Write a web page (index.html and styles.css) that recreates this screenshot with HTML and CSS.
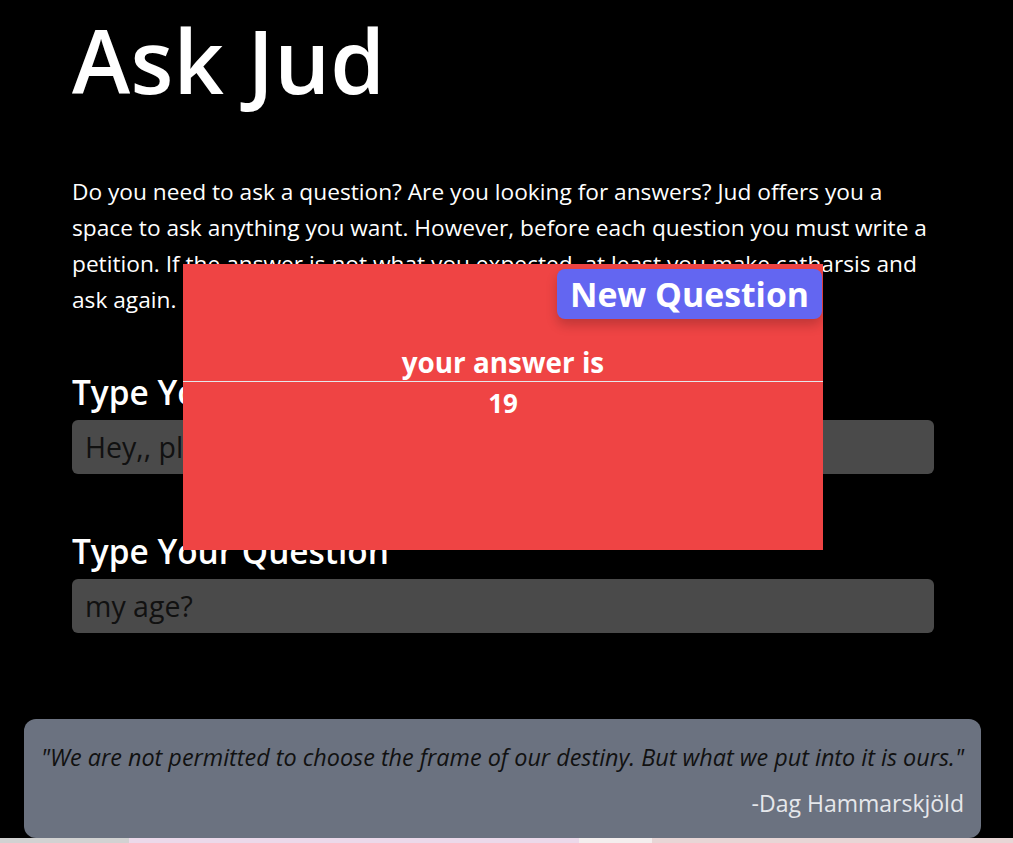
FILE: index.html
```html
<!DOCTYPE html>
<html lang="en">
<head>
<meta charset="utf-8">
<title>Ask Jud</title>
<link rel="stylesheet" href="styles.css">
</head>
<body>
<main class="page">
  <div class="container">
    <h1 class="title">Ask Jud</h1>
    <p class="intro">Do you need to ask a question? Are you looking for answers? Jud offers you a space to ask anything you want. However, before each question you must write a petition. If the answer is not what you expected, at least you make catharsis and ask again.</p>
    <form class="form">
      <label class="field">
        <span class="label">Type Your Petition</span>
        <input class="input" type="text" value="Hey,, please Jud answer my question">
      </label>
      <label class="field field-second">
        <span class="label">Type Your Question</span>
        <input class="input" type="text" value="my age?">
      </label>
    </form>
  </div>
  <footer class="quote">
    <p class="quote-text">"We are not permitted to choose the frame of our destiny. But what we put into it is ours."</p>
    <p class="quote-author">-Dag Hammarskjöld</p>
  </footer>
  <div class="answer">
    <button class="new-btn" type="button">New Question</button>
    <p class="answer-title">your answer is</p>
    <hr class="answer-rule">
    <p class="answer-value">19</p>
  </div>
</main>
<div class="strip">
  <span class="seg seg-a"></span>
  <span class="seg seg-b"></span>
  <span class="seg seg-c"></span>
  <span class="seg seg-d"></span>
</div>
</body>
</html>
```

FILE: styles.css
```css
* { box-sizing: border-box; }
html, body { margin: 0; padding: 0; }
body {
  background: #000;
  color: #fff;
  font-family: "Open Sans", "Noto Sans", sans-serif;
  height: 843px;
  overflow: hidden;
  display: flex;
  flex-direction: column;
}
.page {
  position: relative;
  height: 838px;
  display: flex;
  flex-direction: column;
}
.container {
  margin-left: 72px;
  width: 862px;
  flex: 1;
}
.title {
  margin: 0;
  padding-top: 2px;
  font-size: 88px;
  line-height: 116px;
  font-weight: 600;
  letter-spacing: 0.3px;
  height: 116px;
}
.intro {
  margin: 58px 0 0;
  font-size: 22.7px;
  line-height: 36px;
}
.form {
  margin-top: 56px;
  display: flex;
  flex-direction: column;
}
.field { display: flex; flex-direction: column; gap: 10px; }
.field-second { margin-top: 59px; }
.label {
  font-size: 33.4px;
  line-height: 36px;
  font-weight: 600;
}
.input {
  height: 54px;
  border: none;
  border-radius: 6px;
  background: #4a4a4a;
  color: #111;
  font-family: inherit;
  font-size: 28.5px;
  padding: 0 13px;
  outline: none;
}
.quote {
  margin: 0 32px 0 24px;
  height: 119px;
  background: #6b7280;
  border-radius: 12px;
  padding: 22px 17px 0 17px;
  display: flex;
  flex-direction: column;
}
.quote-text {
  margin: 0;
  font-style: italic;
  color: #111;
  font-size: 23.4px;
  line-height: 32px;
  text-align: center;
  white-space: nowrap;
}
.quote-author {
  margin: 0;
  margin-top: 15px;
  text-align: right;
  color: #e5e7eb;
  font-size: 23px;
  line-height: 30px;
}
.answer {
  position: absolute;
  left: 183px;
  top: 264px;
  width: 640px;
  height: 286px;
  background: #ef4444;
  display: flex;
  flex-direction: column;
  align-items: center;
}
.new-btn {
  align-self: flex-end;
  margin-top: 5px;
  margin-right: 1px;
  height: 50px;
  width: 265px;
  border: none;
  border-radius: 8px;
  background: #6366f1;
  color: #fff;
  font-family: inherit;
  font-weight: 700;
  font-size: 33.8px;
  padding: 0;
  box-shadow: 0 6px 12px rgba(0,0,0,0.2);
}
.answer-title {
  margin: 26px 0 0;
  font-size: 27.8px;
  line-height: 34px;
  font-weight: 700;
}
.answer-rule {
  width: 100%;
  margin: 2px 0 0;
  border: none;
  border-top: 1px solid #e5e7eb;
}
.answer-value {
  margin: 4px 0 0;
  font-size: 26px;
  line-height: 34px;
  font-weight: 700;
}
.strip {
  display: flex;
  height: 5px;
}
.seg { display: block; height: 100%; }
.seg-a { width: 129px; background: #d2d2d2; }
.seg-b { width: 450px; background: #ecd9ea; }
.seg-c { width: 73px; background: #f4eeee; }
.seg-d { flex: 1; background: #e8d6d6; }
```
